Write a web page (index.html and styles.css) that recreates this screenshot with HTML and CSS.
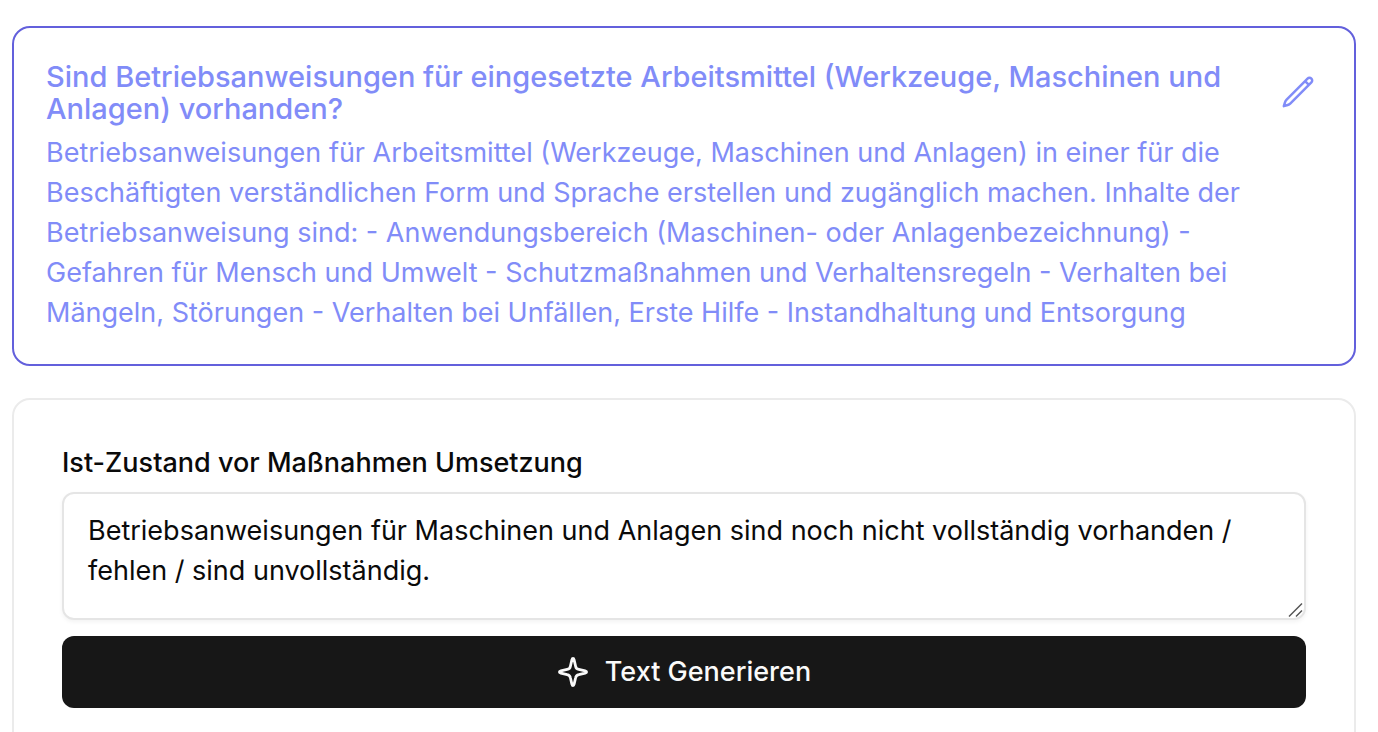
FILE: index.html
```html
<!DOCTYPE html>
<html lang="de">
<head>
    <meta charset="UTF-8">
    <meta name="viewport" content="width=device-width, initial-scale=1.0">
    <title>Betriebsanweisungen</title>
    <link rel="stylesheet" href="styles.css">
</head>
<body>
    <main class="page">
        <!-- Frage -->
        <section class="card question">
            <div class="question-text">
                <h1 class="question-title">Sind Betriebsanweisungen für eingesetzte Arbeitsmittel (Werkzeuge, Maschinen und Anlagen) vorhanden?</h1>
                <p class="question-description">Betriebsanweisungen für Arbeitsmittel (Werkzeuge, Maschinen und Anlagen) in einer für die Beschäftigten verständlichen Form und Sprache erstellen und zugänglich machen. Inhalte der Betriebsanweisung sind: - Anwendungsbereich (Maschinen- oder Anlagenbezeichnung) - Gefahren für Mensch und Umwelt - Schutzmaßnahmen und Verhaltensregeln - Verhalten bei Mängeln, Störungen - Verhalten bei Unfällen, Erste Hilfe - Instandhaltung und Entsorgung</p>
            </div>
            <button type="button" class="edit-button" aria-label="Bearbeiten">
                <svg class="icon" viewBox="1 1 22 22" fill="none" stroke="currentColor" stroke-width="1.7" stroke-linecap="round" stroke-linejoin="round" aria-hidden="true">
                    <path d="M16.862 4.487l1.687-1.688a1.875 1.875 0 1 1 2.652 2.652L6.832 19.82a4.5 4.5 0 0 1-1.897 1.13l-2.685.8.8-2.685a4.5 4.5 0 0 1 1.13-1.897L16.863 4.487zm0 0L19.5 7.125"/>
                </svg>
            </button>
        </section>

        <!-- Ist-Zustand -->
        <form class="card state">
            <label for="ist-zustand" class="state-label">Ist-Zustand vor Maßnahmen Umsetzung</label>
            <div class="textarea-wrap">
                <textarea id="ist-zustand" class="state-input" rows="2">Betriebsanweisungen für Maschinen und Anlagen sind noch nicht vollständig vorhanden / fehlen / sind unvollständig.</textarea>
                <svg class="grip" viewBox="0 0 16 16" fill="none" stroke="currentColor" stroke-width="1.5" aria-hidden="true">
                    <path d="M1 14.5L14 1.5M8 14.5L14 8.5"/>
                </svg>
            </div>
            <button type="button" class="generate-button">
                <svg class="icon" viewBox="0 0 32 32" fill="none" stroke="currentColor" stroke-width="2.8" stroke-linejoin="round" aria-hidden="true">
                    <path d="M16 2.4C16.6 2.4 16.9 2.9 17.1 3.8L18.6 10.2C18.9 11.9 20.1 13.1 21.8 13.4L28.2 14.9C29.1 15.1 29.6 15.4 29.6 16C29.6 16.6 29.1 16.9 28.2 17.1L21.8 18.6C20.1 18.9 18.9 20.1 18.6 21.8L17.1 28.2C16.9 29.1 16.6 29.6 16 29.6C15.4 29.6 15.1 29.1 14.9 28.2L13.4 21.8C13.1 20.1 11.9 18.9 10.2 18.6L3.8 17.1C2.9 16.9 2.4 16.6 2.4 16C2.4 15.4 2.9 15.1 3.8 14.9L10.2 13.4C11.9 13.1 13.1 11.9 13.4 10.2L14.9 3.8C15.1 2.9 15.4 2.4 16 2.4Z"/>
                </svg>
                Text Generieren
            </button>
        </form>
    </main>
</body>
</html>
```
FILE: styles.css
```css
* {
    box-sizing: border-box;
}
body {
    margin: 0;
    font-family: Inter, "Liberation Sans", sans-serif;
    font-size: 27px;
    line-height: 40px;
    color: #0a0a0a;
    background-color: #ffffff;
}
.page {
    display: flex;
    flex-direction: column;
    gap: 32px;
    padding: 26px 22px 0 12px;
}
.card {
    border: 2px solid #ebebeb;
    border-radius: 18px;
}
/* Frage */
.question {
    display: flex;
    align-items: flex-start;
    gap: 8px;
    padding: 32px 24px 31px 32px;
    border-color: #6360dc;
    color: #818cf8;
}
.question-text {
    flex: 1;
    padding-top: 1px;
}
.question-title {
    margin: 0 0 8px;
    font-size: 29px;
    font-weight: 500;
    line-height: 32px;
}
.question-description {
    margin: 0;
}
.edit-button {
    display: flex;
    padding: 16px;
    border: none;
    color: inherit;
    background: none;
    cursor: pointer;
}
.icon {
    width: 32px;
    height: 32px;
}
/* Ist-Zustand */
.state {
    display: flex;
    flex-direction: column;
    padding: 43px 48px 48px;
}
.state-label {
    margin-bottom: 9px;
    font-weight: 500;
}
.textarea-wrap {
    display: flex;
    position: relative;
    margin-bottom: 16px;
}
.state-input {
    width: 100%;
    height: 128px;
    padding: 17px 24px;
    border: 2px solid #e5e5e5;
    border-radius: 12px;
    font: inherit;
    color: inherit;
    background-color: #ffffff;
    box-shadow: 0 2px 4px rgba(0, 0, 0, 0.05);
    overflow: hidden;
    resize: none;
}
.grip {
    position: absolute;
    right: 2px;
    bottom: 2px;
    width: 16px;
    height: 16px;
    color: #555555;
    pointer-events: none;
}
.generate-button {
    display: flex;
    align-items: center;
    justify-content: center;
    gap: 16px;
    height: 72px;
    border: none;
    border-radius: 12px;
    font: inherit;
    font-weight: 500;
    color: #fafafa;
    background-color: #171717;
    cursor: pointer;
}
```
